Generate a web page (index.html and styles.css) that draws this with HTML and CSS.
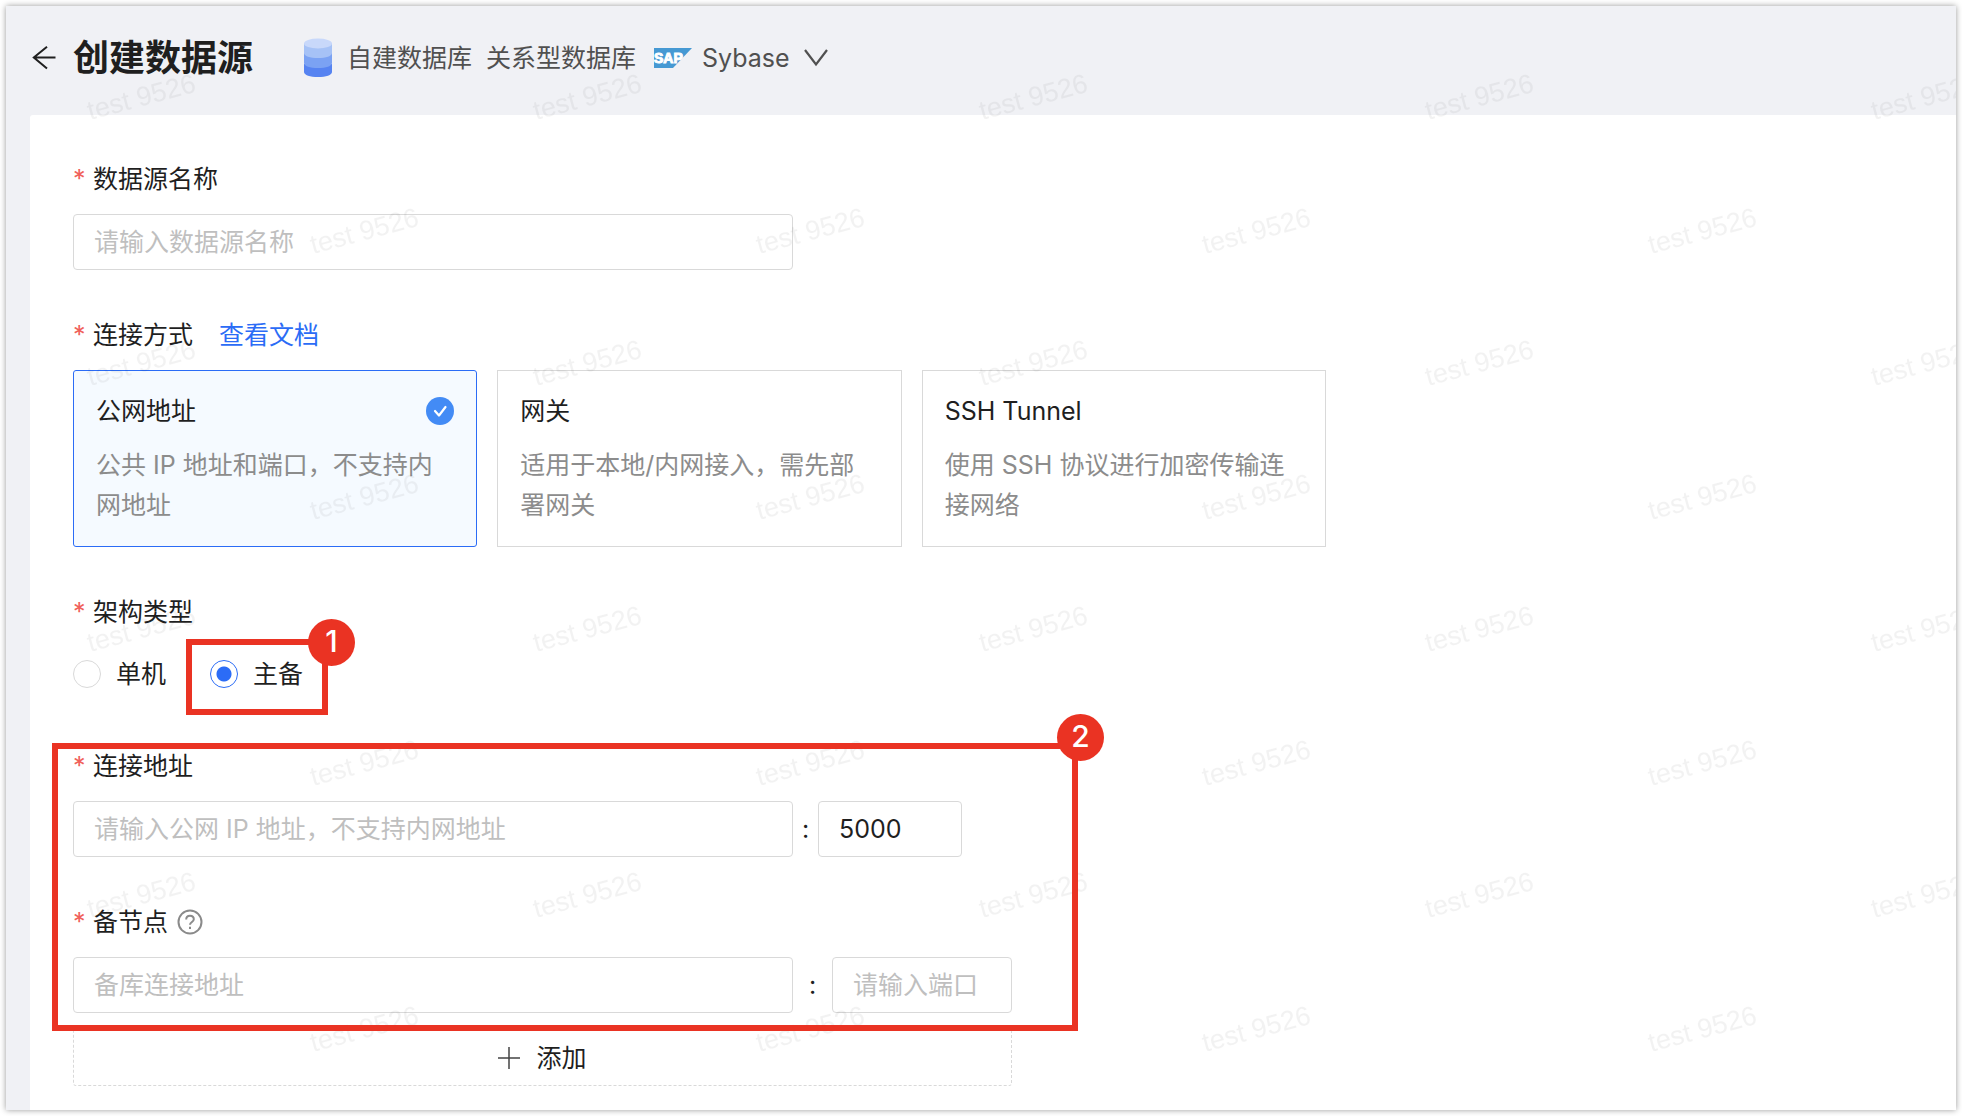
FILE: index.html
```html
<!DOCTYPE html>
<html lang="zh-CN">
<head>
<meta charset="utf-8">
<meta name="viewport" content="width=device-width, initial-scale=1">
<title>创建数据源</title>
<link rel="stylesheet" href="styles.css">
</head>
<body>
<div class="window">
  <header class="header">
    <button class="icon-button" type="button" aria-label="返回">
      <svg width="24" height="24" viewBox="0 0 24 24" fill="none" stroke="#1f1f1f" stroke-width="2"><path d="M23.500 11.500H1.500M15 .8 L1.800 11.500L15 22.500"/></svg>
    </button>
    <h1 class="title">创建数据源</h1>
    <button class="source" type="button">
      <svg class="source-db" width="28" height="40" viewBox="0 0 28 40">
        <path fill="#5683f1" d="M0 26h28v8c0 3-6 5-14 5S0 37 0 34z"/>
        <path fill="#7ba2f3" d="M0 15h28v10c0 3-6 5-14 5S0 28 0 25z"/>
        <path fill="#a6c2f6" d="M0 5h28v10c0 3-6 5-14 5S0 18 0 15z"/>
        <ellipse cx="14" cy="5.500" rx="14" ry="5" fill="#c8d8fa"/>
      </svg>
      <span class="source-kind">自建数据库</span>
      <span class="source-group">关系型数据库</span>
      <svg class="source-logo" width="38" height="20" viewBox="0 0 38 20">
        <path fill="#4699d3" d="M0 0h38L19 20H0z"/>
        <text class="logo-text" x="0" y="15">SAP</text>
      </svg>
      <span class="source-name">Sybase</span>
      <svg width="24" height="18" viewBox="0 0 24 18" fill="none" stroke="#505050" stroke-width="2.200"><path d="M1 1l11 14.500L23 1"/></svg>
    </button>
  </header>

  <main class="panel">
    <form class="form">
      <div class="item">
        <label class="label required" for="name">数据源名称</label>
        <input class="input" id="name" type="text" placeholder="请输入数据源名称">
      </div>

      <div class="item">
        <div class="label-row">
          <span class="label required">连接方式</span>
          <a class="link" href="#docs">查看文档</a>
        </div>
        <div class="cards">
          <button class="card card-selected" type="button" aria-pressed="true">
            <span class="card-head">公网地址
              <svg width="28" height="28" viewBox="0 0 28 28"><circle cx="14" cy="14" r="14" fill="#438bf5"/><path d="M9 14l4 4.500 6.500-8.500" fill="none" stroke="#fff" stroke-width="2.200" stroke-linecap="round" stroke-linejoin="round"/></svg>
            </span>
            <span class="card-text">公共 IP 地址和端口，不支持内网地址</span>
          </button>
          <button class="card" type="button" aria-pressed="false">
            <span class="card-head">网关</span>
            <span class="card-text">适用于本地/内网接入，需先部署网关</span>
          </button>
          <button class="card" type="button" aria-pressed="false">
            <span class="card-head">SSH Tunnel</span>
            <span class="card-text">使用 SSH 协议进行加密传输连接网络</span>
          </button>
        </div>
      </div>

      <div class="item">
        <span class="label required">架构类型</span>
        <div class="radios">
          <label class="radio"><input type="radio" name="arch">单机</label>
          <label class="radio"><input type="radio" name="arch" checked>主备
            <span class="mark mark-option"><span class="badge">1</span></span>
          </label>
        </div>
      </div>

      <div class="nodes">
        <div class="item">
          <label class="label required" for="host">连接地址</label>
          <div class="address">
            <input class="input" id="host" type="text" placeholder="请输入公网 IP 地址，不支持内网地址">
            <span class="colon">:</span>
            <input class="input port" type="text" value="5000" aria-label="端口">
          </div>
        </div>
        <div class="item">
          <div class="label-row label-row-help">
            <label class="label required" for="standby">备节点</label>
            <svg width="26" height="26" viewBox="0 0 26 26" fill="none" stroke="#8a8a8a" stroke-width="2"><circle cx="13" cy="13" r="11.500"/><path d="M9.200 10.500c0-2.300 1.600-3.800 3.800-3.800s3.800 1.500 3.800 3.500c0 2.600-3.800 2.900-3.800 5.600"/><path d="M13 17.700v2.200"/></svg>
          </div>
          <div class="address">
            <input class="input" id="standby" type="text" placeholder="备库连接地址">
            <span class="colon colon-wide">:</span>
            <input class="input port-wide" type="text" placeholder="请输入端口" aria-label="备库端口">
          </div>
        </div>
        <span class="mark mark-nodes"><span class="badge">2</span></span>
      </div>

      <button class="add" type="button">
        <svg width="22" height="22" viewBox="0 0 22 22" stroke="#444" stroke-width="1.500"><path d="M11 0v22M0 11h22"/></svg>
        添加
      </button>
    </form>
  </main>

  <svg class="watermark" aria-hidden="true">
    <defs>
      <pattern id="wm" width="446" height="266" patternUnits="userSpaceOnUse">
        <text class="watermark-text" transform="translate(84 114) rotate(-15)">test 9526</text>
        <text class="watermark-text" transform="translate(307 248) rotate(-15)">test 9526</text>
      </pattern>
    </defs>
    <rect width="100%" height="100%" fill="url(#wm)"/>
  </svg>
</div>
</body>
</html>
```
FILE: styles.css
```css
* { box-sizing: border-box; }

body {
  margin: 0;
  padding: 6px;
  background: #fff;
  color: #1f1f1f;
  font-family: Inter, "Noto Sans CJK SC", sans-serif;
  font-size: 25px;
  line-height: 38px;
}

button, input { font: inherit; color: inherit; }
button { padding: 0; border: 0; background: none; cursor: pointer; }
svg { display: block; flex: none; }

.window {
  position: relative;
  display: flex;
  flex-direction: column;
  min-height: calc(100vh - 12px);
  background: #f0f1f5;
  box-shadow: 0 0 6px rgba(0, 0, 0, 0.4);
}

/* Header */
.header {
  display: flex;
  align-items: center;
  height: 109px;
  padding: 0 26px 5px;
}
.title { margin: 0 51px 0 17px; font-size: 36px; line-height: 48px; font-weight: 700; white-space: nowrap; }
.source { display: flex; align-items: center; color: #505050; white-space: nowrap; }
.source-kind { margin: 0 14px 0 15px; }
.source-logo { margin: 0 10px 0 18px; }
.source-name { margin-right: 14px; }
.logo-text { fill: #fff; stroke: #fff; stroke-width: 1px; font: 700 14px "Liberation Sans", sans-serif; }

/* Form */
.panel {
  flex: 1;
  margin-left: 24px;
  padding: 45px 43px 24px;
  border-top-left-radius: 3px;
  background: #fff;
}
.item { display: flex; flex-direction: column; align-items: flex-start; gap: 16px; margin-bottom: 46px; }
.label-row { display: flex; align-items: center; gap: 26px; }
.label-row-help { gap: 9px; }
.required { display: flex; }
.required::before { content: "*"; width: 20px; color: #f0605a; }
.link { color: #2b6cf6; text-decoration: none; }

.input {
  width: 720px;
  height: 56px;
  padding: 0 20px;
  border: 1px solid #d9d9d9;
  border-radius: 4px;
  background: #fff;
  outline: none;
}
.input::placeholder { color: #bfbfbf; opacity: 1; }
.port { width: 144px; }
.port-wide { width: 180px; }
.address { display: flex; align-items: center; }
.colon { width: 25px; text-align: center; }
.colon-wide { width: 39px; }

.cards {
  display: grid;
  grid-template-columns: repeat(3, 1fr);
  gap: 20px;
  width: 100%;
  max-width: 1253px;
}
.card {
  display: flex;
  flex-direction: column;
  gap: 14px;
  padding: 20px 22px 21px;
  border: 1px solid #d9d9d9;
  line-height: 40px;
  text-align: left;
}
.card-selected { border-color: #2b6cf6; border-radius: 3px; background: #f5faff; }
.card-head { display: flex; align-items: center; justify-content: space-between; width: 100%; }
.card-text { color: #8c8c8c; }

.radios { display: flex; gap: 44px; }
.radio { position: relative; display: flex; align-items: center; gap: 15px; height: 54px; }
.radio input {
  appearance: none;
  width: 28px;
  height: 28px;
  margin: 0;
  border: 1px solid #d9d9d9;
  border-radius: 50%;
}
.radio input:checked {
  border-color: #2b6cf6;
  background: radial-gradient(circle, #2b6cf6 7px, #fff 8px);
}

.nodes { position: relative; max-width: 939px; }
.nodes .item:last-of-type { margin-bottom: 16px; }

.add {
  display: flex;
  align-items: center;
  justify-content: center;
  gap: 16px;
  width: 100%;
  max-width: 939px;
  height: 57px;
  border: 1px dashed #d9d9d9;
  border-radius: 3px;
}

/* Step callouts */
.mark { position: absolute; z-index: 2; border: 6px solid #ea3323; pointer-events: none; }
.mark-option { inset: -8px -25px -14px -24px; }
.mark-nodes { inset: -4px -66px -18px -21px; }
.badge {
  position: absolute;
  top: -26px;
  right: -33px;
  width: 47px;
  height: 47px;
  border-radius: 50%;
  background: #ea3323;
  color: #fff;
  font-size: 30px;
  line-height: 44px;
  font-weight: 500;
  text-align: center;
}
.mark-nodes .badge { top: -35px; right: -32px; }

.watermark { position: absolute; inset: 0; z-index: 1; width: 100%; height: 100%; pointer-events: none; }
.watermark-text { fill: rgba(0, 0, 0, 0.05); font: 27px "Liberation Sans", sans-serif; }
```
